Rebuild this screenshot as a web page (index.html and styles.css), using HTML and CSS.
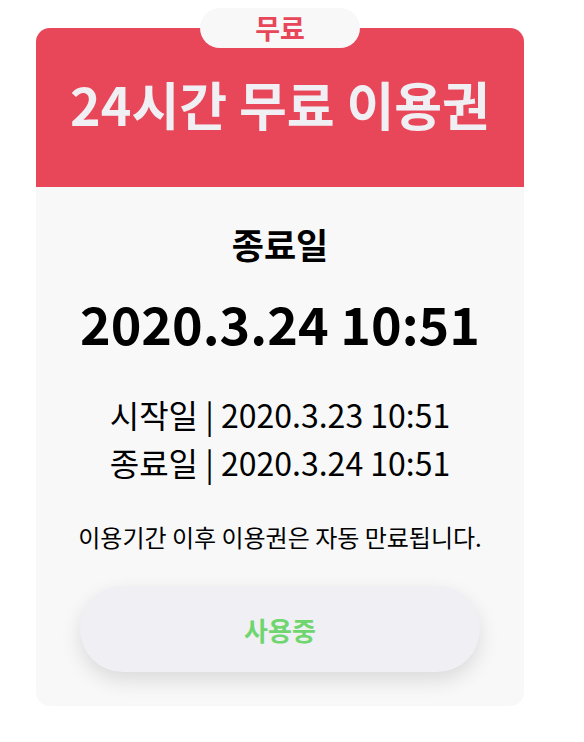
FILE: index.html
```html
<!DOCTYPE html>
<html lang="en">
<head>
<meta charset="utf-8">
<link rel="stylesheet" href="styles.css">
</head>
<body>
<div class="wrap">
  <div class="card">
    <div class="badge">무료</div>
    <div class="head">
      <h1 class="title">24시간 무료 이용권</h1>
    </div>
    <div class="body">
      <div class="label">종료일</div>
      <div class="end">2020.3.24 10:51</div>
      <div class="range">
        <div>시작일 | 2020.3.23 10:51</div>
        <div>종료일 | 2020.3.24 10:51</div>
      </div>
      <p class="note">이용기간 이후 이용권은 자동 만료됩니다.</p>
      <button class="btn">사용중</button>
    </div>
  </div>
</div>
</body>
</html>
```
FILE: styles.css
```css
* { box-sizing: border-box; }
html, body { margin: 0; padding: 0; background: #fff; }
body { font-family: "Noto Sans CJK KR", "Noto Sans", sans-serif; color: #000; }
.wrap { padding: 28px 0 0 36px; }
.card {
  position: relative;
  width: 488px;
  border-radius: 14px;
  background: #f8f8f8;
}
.badge {
  position: absolute;
  top: -20px;
  left: 164px;
  width: 160px;
  height: 40px;
  border-radius: 20px;
  background: #f8f8f8;
  color: #e84659;
  font-weight: 700;
  font-size: 27px;
  line-height: 40px;
  text-align: center;
  z-index: 2;
}
.head {
  height: 159px;
  background: #e84659;
  border-radius: 14px 14px 0 0;
  display: flex;
  align-items: center;
  justify-content: center;
  padding-bottom: 8px;
}
.title {
  margin: 0;
  color: #f0eff4;
  font-size: 52px;
  font-weight: 700;
  line-height: 64px;
}
.body {
  display: flex;
  flex-direction: column;
  align-items: center;
  padding: 35px 0 34px;
  border-radius: 0 0 14px 14px;
}
.label { font-size: 35px; font-weight: 700; line-height: 44px; }
.end { font-size: 52px; font-weight: 700; line-height: 64px; margin-top: 25px; margin-bottom: 3px; }
.range { margin-top: 32px; font-size: 32px; line-height: 48px; text-align: center; }
.note { margin: 35px 0 0; font-size: 24px; line-height: 32px; }
.btn {
  margin-top: 33px;
  width: 400px;
  height: 86px;
  border: none;
  border-radius: 43px;
  background: #efeff4;
  color: #6fd66f;
  font-family: inherit;
  font-weight: 700;
  font-size: 26px;
  box-shadow: 0 8px 20px rgba(0,0,0,0.12);
}
```
